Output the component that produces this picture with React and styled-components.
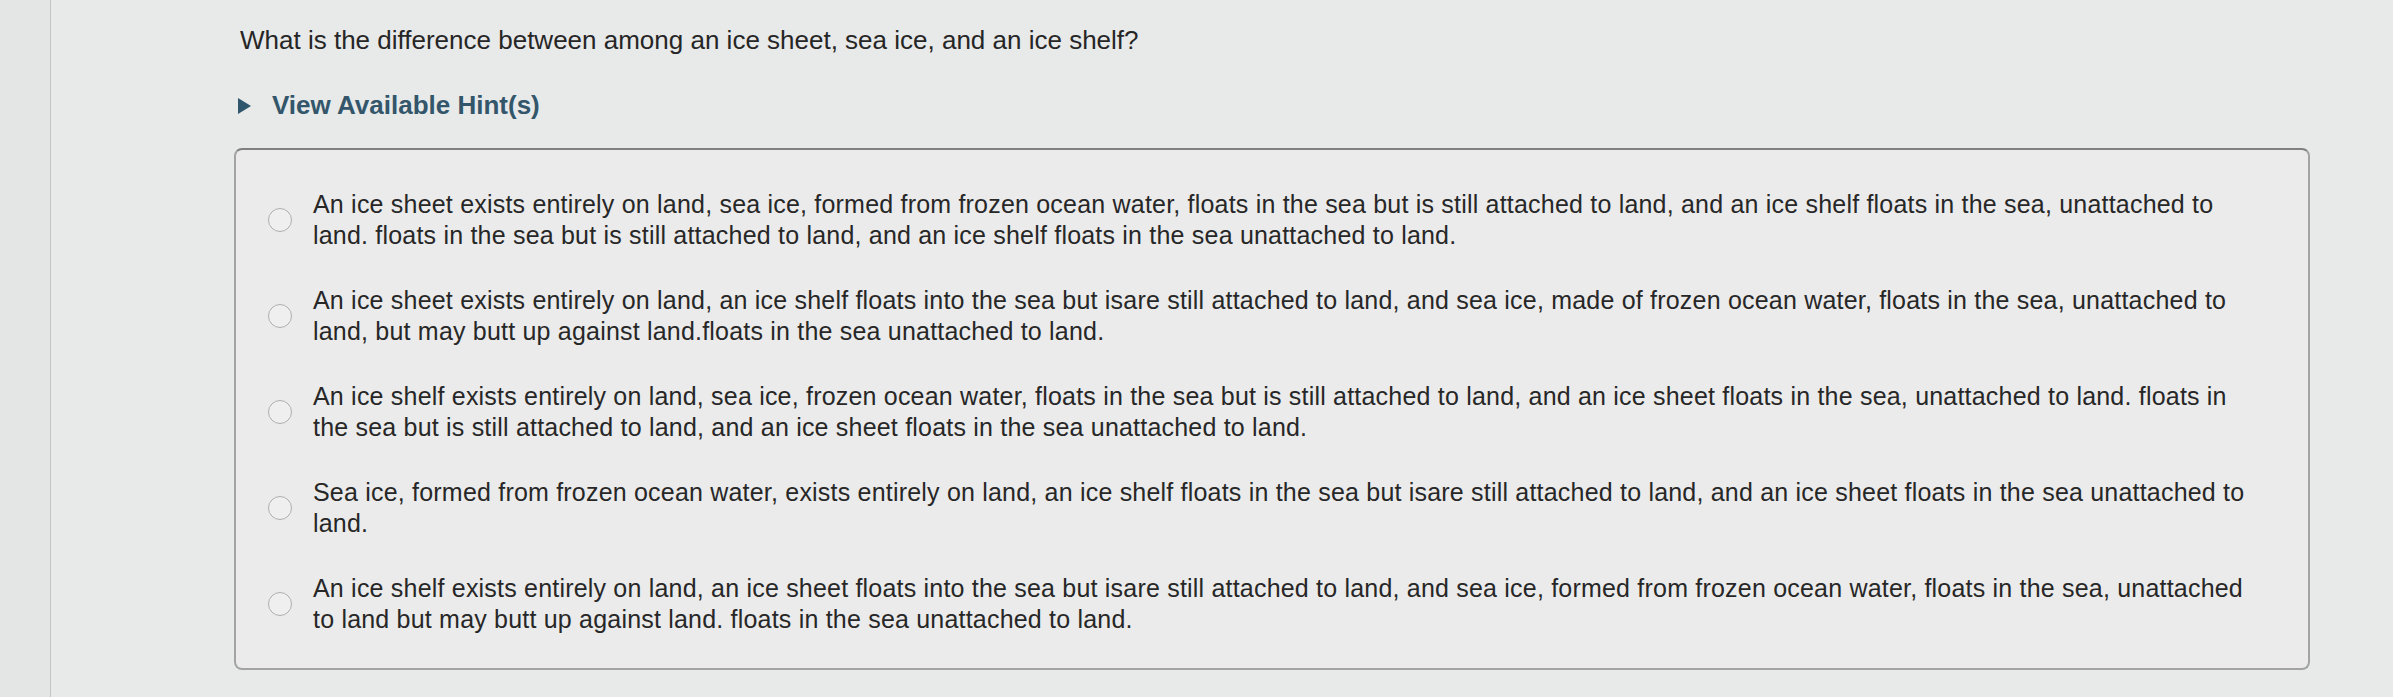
import React from "react";
import styled, { createGlobalStyle } from "styled-components";

const GlobalStyle = createGlobalStyle`
  html, body {
    margin: 0;
    padding: 0;
    background: #e8e9e9;
  }
  body {
    font-family: "Liberation Sans", Arial, Helvetica, sans-serif;
    color: #2b2b2b;
  }
`;

const options = [
  "An ice sheet exists entirely on land, sea ice, formed from frozen ocean water, floats in the sea but is still attached to land, and an ice shelf floats in the sea, unattached to land. floats in the sea but is still attached to land, and an ice shelf floats in the sea unattached to land.",
  "An ice sheet exists entirely on land, an ice shelf floats into the sea but isare still attached to land, and sea ice, made of frozen ocean water, floats in the sea, unattached to land, but may butt up against land.floats in the sea unattached to land.",
  "An ice shelf exists entirely on land, sea ice, frozen ocean water, floats in the sea but is still attached to land, and an ice sheet floats in the sea, unattached to land. floats in the sea but is still attached to land, and an ice sheet floats in the sea unattached to land.",
  "Sea ice, formed from frozen ocean water, exists entirely on land, an ice shelf floats in the sea but isare still attached to land, and an ice sheet floats in the sea unattached to land.",
  "An ice shelf exists entirely on land, an ice sheet floats into the sea but isare still attached to land, and sea ice, formed from frozen ocean water, floats in the sea, unattached to land but may butt up against land. floats in the sea unattached to land.",
];

const Page = styled.div`
  display: flex;
  min-height: 697px;
`;

const LeftRail = styled.div`
  width: 50px;
  flex-shrink: 0;
  background: #e4e5e5;
  border-right: 1px solid #c2c3c3;
`;

const Main = styled.main`
  flex: 1;
  padding: 25px 83px 0 183px;
`;

const Question = styled.p`
  margin: 0 0 0 6px;
  font-size: 26px;
  line-height: 31px;
  color: #262626;
`;

const HintToggle = styled.button`
  display: flex;
  align-items: center;
  gap: 21px;
  margin: 34px 0 0 4px;
  padding: 0;
  border: none;
  background: none;
  font-family: "Liberation Sans", Arial, Helvetica, sans-serif;
  font-size: 26px;
  line-height: 31px;
  font-weight: 700;
  color: #33566b;
  cursor: pointer;
`;

const Caret = styled.span`
  width: 0;
  height: 0;
  border-top: 8px solid transparent;
  border-bottom: 8px solid transparent;
  border-left: 13px solid #2f566c;
`;

const AnswerBox = styled.div`
  margin-top: 27px;
  height: 522px;
  box-sizing: border-box;
  padding: 39px 42px 0 32px;
  background: #ebebeb;
  border: 2px solid #a3a3a3;
  border-top-color: #808080;
  border-radius: 8px;
  display: flex;
  flex-direction: column;
  gap: 34px;
`;

const Option = styled.label`
  display: flex;
  align-items: center;
  gap: 21px;
  cursor: pointer;
`;

const Radio = styled.span`
  flex-shrink: 0;
  width: 22px;
  height: 22px;
  border: 1.5px solid #afafaf;
  border-radius: 50%;
  background: #efefef;
`;

const OptionText = styled.span`
  font-size: 25px;
  line-height: 31px;
  letter-spacing: 0.2px;
  color: #272727;
`;

export default function App() {
  return (
    <>
      <GlobalStyle />
      <Page>
        <LeftRail />
        <Main>
          <Question>
            What is the difference between among an ice sheet, sea ice, and an ice shelf?
          </Question>
          <HintToggle type="button">
            <Caret />
            View Available Hint(s)
          </HintToggle>
          <AnswerBox>
            {options.map((text, i) => (
              <Option key={i}>
                <Radio />
                <OptionText>{text}</OptionText>
              </Option>
            ))}
          </AnswerBox>
        </Main>
      </Page>
    </>
  );
}
